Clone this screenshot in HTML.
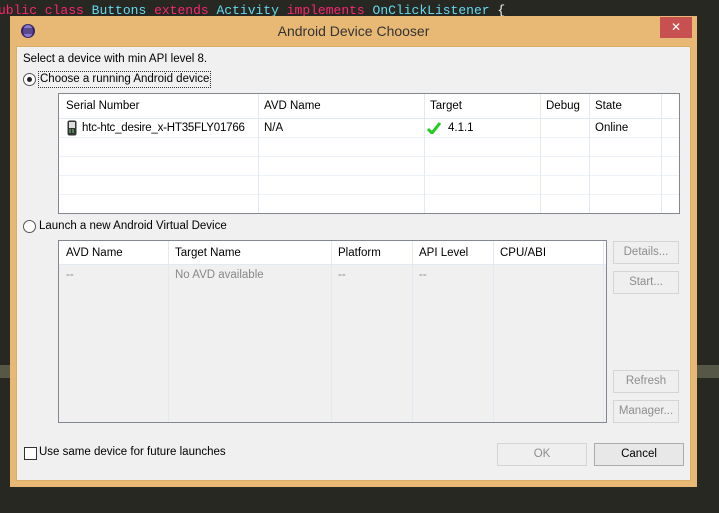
<!DOCTYPE html>
<html><head><style>
*{margin:0;padding:0;box-sizing:border-box}
body{width:719px;height:513px;background:#272822;position:relative;overflow:hidden;font-family:"Liberation Sans",sans-serif;font-size:11.5px;color:#000}
.a{position:absolute}
.code{left:-2px;top:3px;font-family:"Liberation Mono",monospace;font-size:13px;white-space:pre;color:#f8f8f2}
.k{color:#f92672}.t{color:#66d9ef}
.dlg{left:10px;top:16px;width:687px;height:471px;background:#e8b974}
.in{left:16px;top:46px;width:675px;height:435px;background:#f0f0f0;border:1px solid #d9ae6a}
.tb{background:#fff;border:1px solid #828790}
.c{position:absolute;top:0;bottom:0;border-left:1px solid #e3e9f3}
.r{position:absolute;left:0;right:0;border-top:1px solid #edf1f8}
.btn{position:absolute;border:1px solid #d4d4d4;background:#efefef;color:#8d8d8d;text-align:center;line-height:21px}
.rad{width:13px;height:13px;border:1px solid #555;border-radius:50%;background:#fff}
</style></head><body>
<div class="a code"><span class="k">ublic class</span> <span class="t">Buttons</span> <span class="k">extends</span> <span class="t">Activity</span> <span class="k">implements</span> <span class="t">OnClickListener</span> {</div>
<div class="a" style="left:0;top:365px;width:10px;height:13px;background:#575748"></div>
<div class="a" style="left:697px;top:365px;width:22px;height:13px;background:#575748"></div>
<div class="a dlg"></div>
<svg class="a" style="left:20px;top:23px" width="16" height="16"><circle cx="8" cy="8" r="7" fill="#3a2a6a"/><ellipse cx="8" cy="8" rx="5" ry="6" fill="#8a78c8"/><path d="M2 6h12M2 8h12M2 10h12" stroke="#2a1a5a" stroke-width="1"/></svg>
<div class="a" style="left:10px;top:23px;width:687px;text-align:center;font-size:14px;color:#333">Android Device Chooser</div>
<div class="a" style="left:660px;top:17px;width:32px;height:21px;background:#c75050;color:#fff;text-align:center;font-size:12px;line-height:20px">✕</div>
<div class="a in"></div>
<div class="a" style="left:23px;top:53px">Select a device with min API level 8.</div>
<div class="a rad" style="left:23px;top:73px"><div style="position:absolute;left:3px;top:3px;width:5px;height:5px;border-radius:50%;background:#222"></div></div>
<div class="a" style="left:38px;top:71px;border:1px dotted #333;padding:0 1px;line-height:15px">Choose a running Android device</div>
<div class="a tb" style="left:58px;top:93px;width:622px;height:121px">
 <div class="r" style="top:24px;border-color:#e3e9f3"></div>
 <div class="r" style="top:43px"></div><div class="r" style="top:62px"></div><div class="r" style="top:81px"></div><div class="r" style="top:100px"></div>
 <div class="c" style="left:199px"></div><div class="c" style="left:365px"></div><div class="c" style="left:481px"></div><div class="c" style="left:530px"></div><div class="c" style="left:602px"></div>
 <div class="a" style="left:7px;top:6px">Serial Number</div>
 <div class="a" style="left:205px;top:6px">AVD Name</div>
 <div class="a" style="left:371px;top:6px">Target</div>
 <div class="a" style="left:487px;top:6px">Debug</div>
 <div class="a" style="left:536px;top:6px">State</div>
 <svg class="a" style="left:8px;top:26px" width="10" height="16"><rect x="0.5" y="0.5" width="9" height="15" rx="2" fill="#333"/><rect x="2" y="2" width="6" height="6" fill="#ddd"/><path d="M2 10h2M5 10h2M2 12h2M5 12h2" stroke="#7c7" /></svg>
 <div class="a" style="left:23px;top:28px;letter-spacing:-0.2px">htc-htc_desire_x-HT35FLY01766</div>
 <div class="a" style="left:205px;top:28px">N/A</div>
 <svg class="a" style="left:368px;top:28px" width="14" height="12"><path d="M1 7l4 4 8-10" stroke="#2c2" stroke-width="3" fill="none"/></svg>
 <div class="a" style="left:389px;top:28px">4.1.1</div>
 <div class="a" style="left:536px;top:28px">Online</div>
</div>
<div class="a rad" style="left:23px;top:220px"></div>
<div class="a" style="left:39px;top:220px">Launch a new Android Virtual Device</div>
<div class="a tb" style="left:58px;top:240px;width:549px;height:183px;background:#f0f0f0">
 <div class="a" style="left:0;top:0;right:0;height:24px;background:#fff;border-bottom:1px solid #e3e9f3"></div>
 <div class="c" style="left:109px"></div><div class="c" style="left:272px"></div><div class="c" style="left:353px"></div><div class="c" style="left:434px"></div><div class="c" style="left:544px"></div>
 <div class="a" style="left:7px;top:6px">AVD Name</div>
 <div class="a" style="left:116px;top:6px">Target Name</div>
 <div class="a" style="left:279px;top:6px">Platform</div>
 <div class="a" style="left:360px;top:6px">API Level</div>
 <div class="a" style="left:441px;top:6px">CPU/ABI</div>
 <div class="a" style="left:7px;top:28px;color:#888">--</div>
 <div class="a" style="left:116px;top:28px;color:#888">No AVD available</div>
 <div class="a" style="left:279px;top:28px;color:#888">--</div>
 <div class="a" style="left:360px;top:28px;color:#888">--</div>
</div>
<div class="btn" style="left:613px;top:241px;width:66px;height:23px">Details...</div>
<div class="btn" style="left:613px;top:271px;width:66px;height:23px">Start...</div>
<div class="btn" style="left:613px;top:370px;width:66px;height:23px">Refresh</div>
<div class="btn" style="left:613px;top:400px;width:66px;height:23px">Manager...</div>
<div class="a" style="left:24px;top:447px;width:13px;height:13px;border:1px solid #333;background:#fff"></div>
<div class="a" style="left:39px;top:446px">Use same device for future launches</div>
<div class="btn" style="left:497px;top:443px;width:90px;height:23px">OK</div>
<div class="btn" style="left:594px;top:443px;width:90px;height:23px;border-color:#acacac;background:#e8e8e8;color:#000">Cancel</div>
</body></html>
